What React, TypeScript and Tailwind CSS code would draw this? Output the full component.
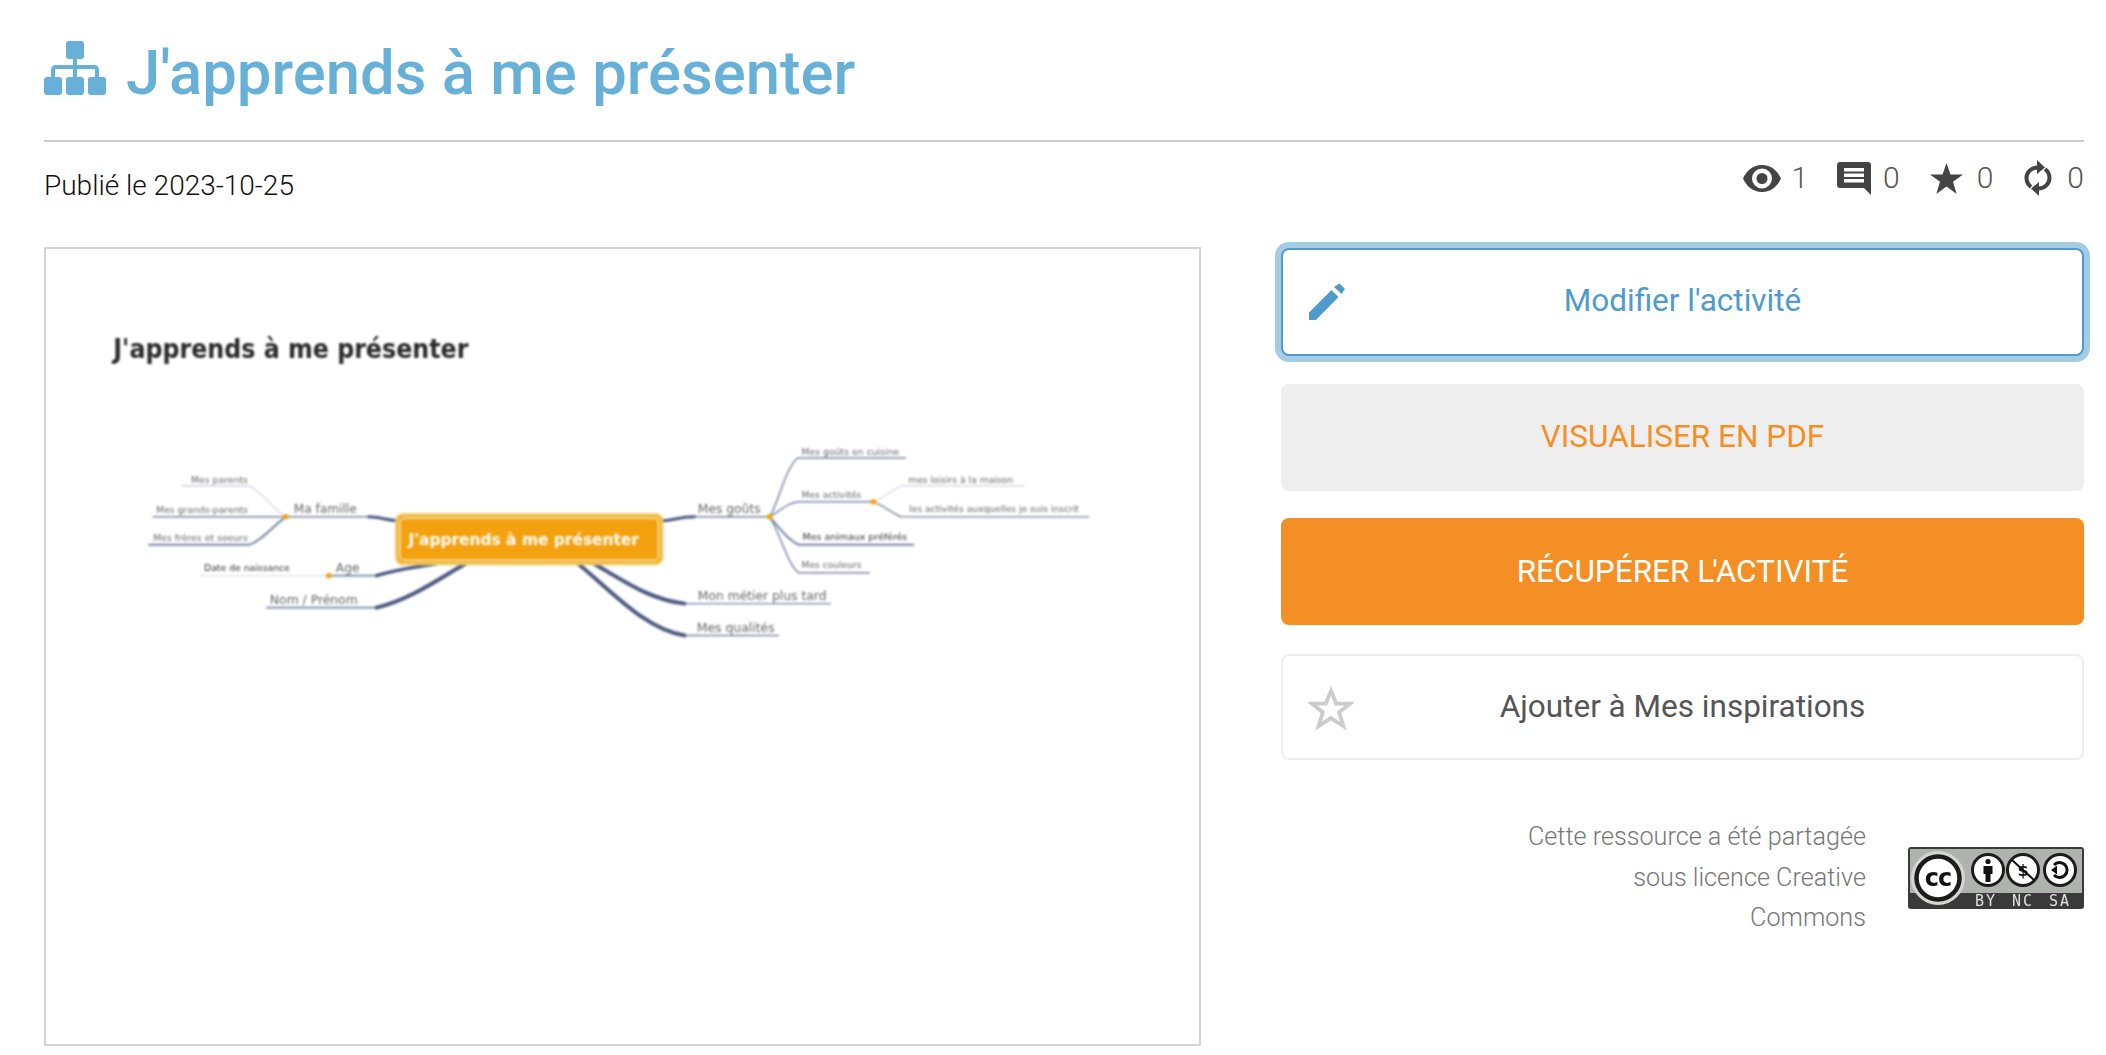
import React from "react";

const C = "#7a84a4";

function MapText({ x, y, w, size, fill = "#666", weight = 400, children }: { x: number; y: number; w: number; size: number; fill?: string; weight?: number; children: string }) {
  return (
    <text x={x} y={y} fontSize={size} fill={fill} fontWeight={weight} textLength={w} lengthAdjust="spacingAndGlyphs" fontFamily="'DejaVu Sans', sans-serif">
      {children}
    </text>
  );
}

function MindMap() {
  return (
    <svg viewBox="45 248.500 1155 797" className="block w-full h-full blur-[0.8px]">
      <MapText x={112} y={358} w={356} size={26} fill="#2a2a2a" weight={700}>J'apprends à me présenter</MapText>

      <g fill="none" stroke={C} strokeLinecap="round">
        {/* left side */}
        <path d="M181 486H248C258 490 272 508 285 517" strokeWidth="1" stroke="#b9bfd2" />
        <path d="M152 517H285" strokeWidth="1.600" />
        <path d="M148 545H248C260 542 272 526 285 517" strokeWidth="2" />
        <path d="M285 517H368" strokeWidth="1.500" />
        <path d="M368 517C378 517 385 520 397 521" strokeWidth="3" stroke="#4d5980" />
        <path d="M199 576H328" strokeWidth="1" stroke="#d5d8e3" />
        <path d="M328 576H376" strokeWidth="1.800" />
        <path d="M376 576C395 570 415 567 436 564" strokeWidth="3.500" stroke="#4d5980" />
        <path d="M266 608H376" strokeWidth="1.800" />
        <path d="M376 608C410 600 440 578 465 564" strokeWidth="4" stroke="#4d5980" />
        {/* right side */}
        <path d="M663 521C675 520 680 517 695 517" strokeWidth="3" stroke="#4d5980" />
        <path d="M695 517H770" strokeWidth="1.500" />
        <path d="M770 517C780 500 785 470 798 458H906" strokeWidth="1.500" />
        <path d="M770 517C780 512 788 502 800 502H874" strokeWidth="1.500" />
        <path d="M874 502C885 498 892 490 902 486H1025" strokeWidth="1" stroke="#c5c9d8" />
        <path d="M874 502C885 506 892 513 902 517H1090" strokeWidth="1.400" />
        <path d="M770 517C780 528 788 540 799 545H914" strokeWidth="2" />
        <path d="M770 517C780 532 788 565 799 573H870" strokeWidth="1.400" />
        <path d="M594 564C625 582 650 600 685 604" strokeWidth="4" stroke="#4d5980" />
        <path d="M685 604H831" strokeWidth="1.400" />
        <path d="M578 564C610 590 645 630 685 636" strokeWidth="4" stroke="#4d5980" />
        <path d="M685 636H779" strokeWidth="1.400" />
      </g>

      <g fill="#f5a20e">
        <circle cx="285" cy="517" r="2.800" />
        <circle cx="328" cy="576" r="2.800" />
        <circle cx="770" cy="517" r="2.800" />
        <circle cx="874" cy="502" r="2.800" />
      </g>

      <rect x="396" y="515" width="266" height="49" rx="6" fill="#f3a10e" stroke="#f0c860" strokeWidth="3" />
      <rect x="399.500" y="518.500" width="259" height="42" rx="4" fill="none" stroke="#fbe7b5" strokeWidth="1.500" />
      <MapText x={408} y={545} w={231} size={16} fill="#fff" weight={700}>J'apprends à me présenter</MapText>

      <MapText x={190} y={483} w={57} size={9}>Mes parents</MapText>
      <MapText x={155} y={513} w={92} size={9}>Mes grands-parents</MapText>
      <MapText x={152} y={541} w={95} size={9}>Mes frères et soeurs</MapText>
      <MapText x={293} y={513} w={63} size={12}>Ma famille</MapText>
      <MapText x={203} y={571} w={86} size={9} fill="#333">Date de naissance</MapText>
      <MapText x={335} y={572} w={24} size={12}>Age</MapText>
      <MapText x={269} y={604} w={88} size={12}>Nom / Prénom</MapText>

      <MapText x={698} y={513} w={63} size={12}>Mes goûts</MapText>
      <MapText x={802} y={455} w={98} size={9}>Mes goûts en cuisine</MapText>
      <MapText x={802} y={498} w={60} size={9}>Mes activités</MapText>
      <MapText x={909} y={483} w={105} size={9}>mes loisirs à la maison</MapText>
      <MapText x={910} y={512} w={170} size={9}>les activités auxquelles je suis inscrit</MapText>
      <MapText x={803} y={540} w={105} size={9} fill="#333">Mes animaux préférés</MapText>
      <MapText x={802} y={568} w={60} size={9}>Mes couleurs</MapText>
      <MapText x={698} y={600} w={129} size={12}>Mon métier plus tard</MapText>
      <MapText x={697} y={632} w={78} size={12}>Mes qualités</MapText>
    </svg>
  );
}

function CcBadge() {
  return (
    <svg viewBox="0 0 176 62" className="block w-[176px] h-[62px] shrink-0 blur-[0.4px]">
      <rect x="0" y="0" width="176" height="62" rx="3" fill="#3a3a3a" />
      <rect x="2" y="2" width="172" height="44" fill="#aeb4ad" />
      <circle cx="30" cy="31" r="27" fill="#d4d6d2" />
      <circle cx="30" cy="31" r="21.500" fill="#fff" stroke="#1c1c1c" strokeWidth="4.500" />
      <text x="30" y="39" textAnchor="middle" fontSize="24" fontWeight="700" fill="#111" fontFamily="'DejaVu Sans', sans-serif" letterSpacing="-1">cc</text>
      {[80, 115, 152].map((cx) => (
        <circle key={cx} cx={cx} cy="23" r="15.500" fill="#fff" stroke="#1c1c1c" strokeWidth="3" />
      ))}
      <circle cx="80" cy="14.500" r="2.600" fill="#111" />
      <path d="M75.500 19H84.500V27H82.500V35H77.500V27H75.500Z" fill="#111" />
      <text x="115" y="29" textAnchor="middle" fontSize="16" fontWeight="700" fill="#111" fontFamily="'DejaVu Sans', sans-serif">$</text>
      <path d="M104 13L126 33" stroke="#111" strokeWidth="2" />
      <path d="M146 18A7.500 7.500 0 1 1 146 28" fill="none" stroke="#111" strokeWidth="3" />
      <path d="M143 23L149 18.500V27.500Z" fill="#111" />
      <g fontSize="15" fill="#e0e0e0" fontFamily="'DejaVu Sans Mono', monospace" textAnchor="middle" letterSpacing="2">
        <text x="78" y="59">BY</text>
        <text x="115" y="59">NC</text>
        <text x="152" y="59">SA</text>
      </g>
    </svg>
  );
}

function Stat({ value, icon, ml }: { value: string; icon: React.ReactNode; ml: string }) {
  return (
    <div className={`flex items-center ${ml}`}>
      {icon}
      <span className="font-light text-[30px] leading-none text-[#555]">{value}</span>
    </div>
  );
}

export default function App() {
  return (
    <div className="min-h-screen bg-white pl-[44px] pr-[22px] pb-[10px] font-['Roboto',sans-serif]">
      <header className="h-[142px] border-b-2 border-[#cccccc] flex items-start pt-[37px]">
        <svg viewBox="0 0 62 54" className="w-[62px] h-[54px] mt-[4px] shrink-0" fill="#67b0d8">
          <rect x="22" y="0" width="18" height="18" rx="3" />
          <rect x="0" y="36" width="18" height="18" rx="3" />
          <rect x="22" y="36" width="18" height="18" rx="3" />
          <rect x="44" y="36" width="18" height="18" rx="3" />
          <rect x="29" y="18" width="4" height="18" />
          <path d="M7 36V29C7 26 9 24 12 24H50C53 24 55 26 55 29V36H51V29C51 28.500 50.500 28 50 28H12C11.500 28 11 28.500 11 29V36Z" />
        </svg>
        <h1 className="ml-[20px] text-[61.6px] leading-[72px] font-medium text-[#67b0d8]">J'apprends à me présenter</h1>
      </header>

      <div className="h-[105px] flex items-start justify-between">
        <p className="mt-[26px] text-[28px] leading-[36px] font-light text-[#111]">Publié le 2023-10-25</p>
        <div className="flex items-center mt-[18px]">
          <Stat
            ml=""
            value="1"
            icon={
              <svg viewBox="0 0 38 27" className="w-[38px] h-[27px] mr-[10px]" fill="#444">
                <path fillRule="evenodd" d="M19 0C29 0 35 7 38 13.500C35 20 29 27 19 27C9 27 3 20 0 13.500C3 7 9 0 19 0ZM19 3.500A10 10 0 1 0 19 23.500A10 10 0 1 0 19 3.500Z" />
                <circle cx="19" cy="13.500" r="5.500" />
              </svg>
            }
          />
          <Stat
            ml="ml-[29px]"
            value="0"
            icon={
              <svg viewBox="0 0 34 33" className="w-[34px] h-[33px] mr-[12px]" fill="#444">
                <path fillRule="evenodd" d="M3 0H31C32.700 0 34 1.300 34 3V33L27 26H3C1.300 26 0 24.700 0 23V3C0 1.300 1.300 0 3 0ZM7 6V9.500H27V6ZM7 11.500V15H27V11.500ZM7 17V20.500H27V17Z" />
              </svg>
            }
          />
          <Stat
            ml="ml-[30px]"
            value="0"
            icon={
              <svg viewBox="0 0 33 31" className="w-[33px] h-[31px] mr-[14px]" fill="#444">
                <path d="M16.500 0L20.500 11.500H33L23 18.800L26.700 31L16.500 23.600L6.300 31L10 18.800L0 11.500H12.500Z" />
              </svg>
            }
          />
          <Stat
            ml="ml-[31px]"
            value="0"
            icon={
              <svg viewBox="0 0 28 36" className="w-[28px] h-[36px] mr-[15px]" fill="none" stroke="#444" strokeWidth="4">
                <path d="M14 7.500C7 7.500 2.500 12.500 2.500 18C2.500 22 4.500 25 7 27" />
                <path d="M14 28.500C21 28.500 25.500 23.500 25.500 18C25.500 14 23.500 11 21 9" />
                <path d="M13 0L21 7.500L13 14Z" fill="#444" stroke="none" />
                <path d="M15 22L7 28.500L15 36Z" fill="#444" stroke="none" />
              </svg>
            }
          />
        </div>
      </div>

      <main className="flex items-start justify-between">
        <div className="w-[1157px] h-[799px] border-2 border-[#d4d4d4] bg-white">
          <MindMap />
        </div>

        <div className="w-[803px] mt-px flex flex-col gap-[27px]">
          <button className="relative h-[108px] pb-[3px] flex items-center justify-center rounded-[8px] bg-white border-2 border-[#4f9bcb] ring-[6px] ring-[#a4cde3] text-[31.5px] text-[#4f9bcb]">
            <svg viewBox="0 0 36 37" className="absolute left-[26px] top-[33px] w-[36px] h-[37px]" fill="#4f9bcb">
              <path d="M25 4L30.500 0.500L36 6L32.500 11L25 4Z" />
              <path d="M22.500 7L29.500 14L7 37H0V29.500Z" />
            </svg>
            Modifier l'activité
          </button>
          <button className="h-[107px] mt-px pb-[1px] flex items-center justify-center rounded-[8px] bg-[#eeeeee] text-[31.5px] text-[#f48f26]">VISUALISER EN PDF</button>
          <button className="h-[107px] flex items-center justify-center rounded-[8px] bg-[#f48f26] text-[31.5px] text-white">
            <span>
              RÉCUPÉRER L<span className="-mx-[2px]">'</span>ACTIVITÉ
            </span>
          </button>
          <button className="relative h-[106px] mt-[2px] flex items-center justify-center rounded-[8px] bg-white border-2 border-[#eeeeee] text-[31.5px] text-[#555]">
            <svg viewBox="0 0 48 46" className="absolute left-[25px] top-[30px] w-[46px] h-[44px]" fill="none" stroke="#cccccc" strokeWidth="4" strokeLinejoin="miter">
              <path d="M24 5L29.500 18.500H44L32.500 27.500L37 42L24 33.500L11 42L15.500 27.500L4 18.500H18.500Z" />
            </svg>
            Ajouter à Mes inspirations
          </button>

          <div className="flex items-center justify-end mt-[30px]">
            <p className="w-[420px] text-right text-[25.2px] leading-[40.5px] font-light text-[#777]">
              Cette ressource a été partagée
              <br />
              sous licence Creative
              <br />
              Commons
            </p>
            <div className="ml-[42px]">
              <CcBadge />
            </div>
          </div>
        </div>
      </main>
    </div>
  );
}
